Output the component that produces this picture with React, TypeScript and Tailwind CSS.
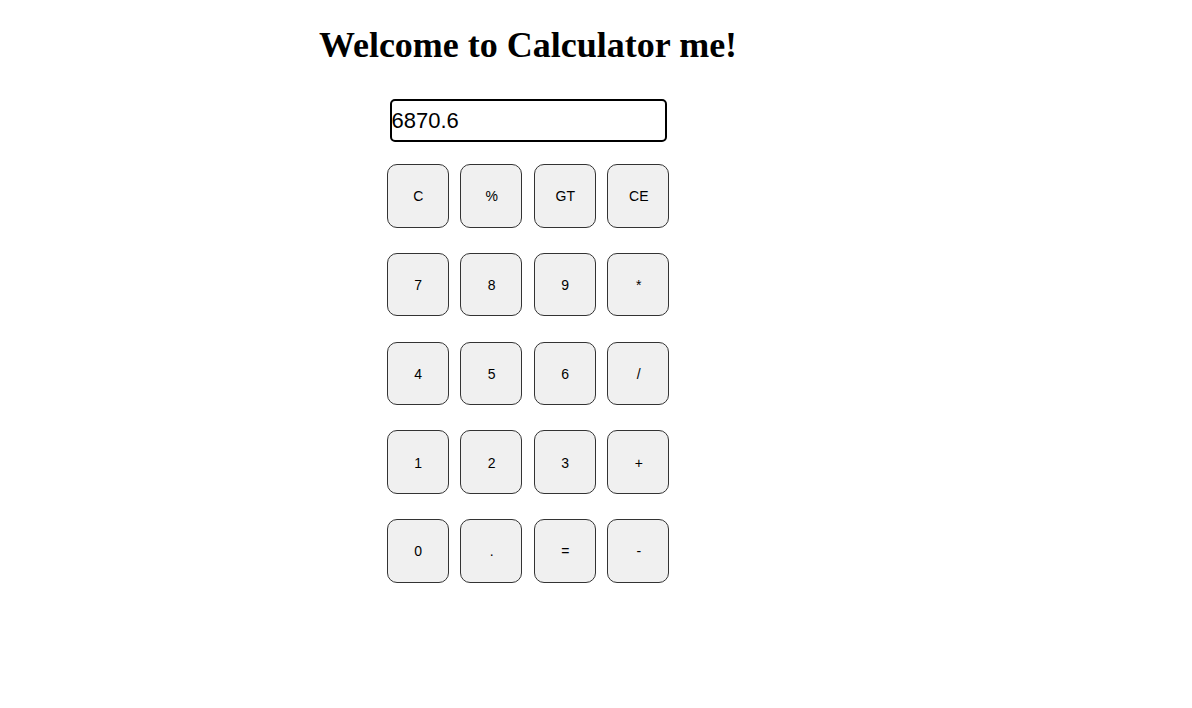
import React, { useState } from 'react'

const rows = [
    ['C', '%', 'GT', 'CE'],
    ['7', '8', '9', '*'],
    ['4', '5', '6', '/'],
    ['1', '2', '3', '+'],
    ['0', '.', '=', '-'],
]

function App() {
    const [value, setValue] = useState('6870.6')

    return (
        <div className="w-[1056px] flex flex-col items-center bg-white">
            <h1 className="mt-[21px] text-[36px] leading-[48px] font-bold text-black font-['Liberation_Serif',serif]">
                Welcome to Calculator me!
            </h1>
            <input
                type="text"
                value={value}
                onChange={(e) => setValue(e.target.value)}
                className="mt-[30px] w-[277px] h-[43px] border-2 border-black rounded-[5px] px-0 text-[22px] text-black font-['Liberation_Sans',Arial,sans-serif] outline-none"
            />
            <div className="mt-[22px] flex flex-col gap-[25.25px]">
                {rows.map((row, i) => (
                    <div key={i} className="flex gap-[11.5px]">
                        {row.map((key) => (
                            <button
                                key={key}
                                className="w-[62px] h-[63.5px] pt-[2px] pl-[1px] rounded-[10px] border border-[#333] bg-[#f0f0f0] text-[14px] text-black font-['Liberation_Sans',Arial,sans-serif]"
                            >
                                {key}
                            </button>
                        ))}
                    </div>
                ))}
            </div>
        </div>
    )
}

export default App
